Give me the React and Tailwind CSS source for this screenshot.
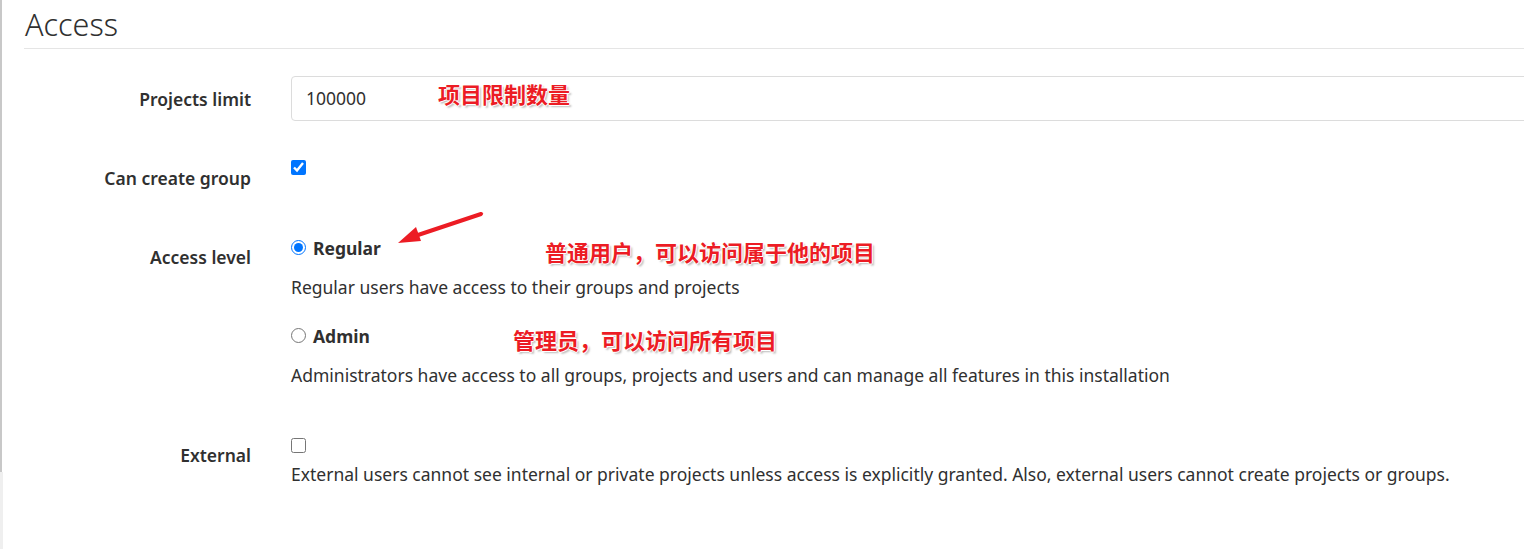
export default function App() {
  const note = 'absolute font-bold text-[22px] leading-[22px] text-[#ec1c24] [text-shadow:1px_0_0_#fff,-1px_0_0_#fff,0_1px_0_#fff,0_-1px_0_#fff,2px_2px_2px_#bbb]'

  return (
    <div
      className="relative flex h-[549px] w-[1524px] overflow-hidden bg-white text-[17.5px] text-[#303030]"
      style={{ fontFamily: '"Noto Sans", "Noto Sans CJK SC", sans-serif' }}
    >
      {/* left edge */}
      <div className="flex w-[3px] shrink-0 flex-col">
        <div className="h-[472px] w-[2px] bg-[#c8c8c8]" />
        <div className="flex-1 bg-[#efefef]" />
      </div>

      <div className="flex-1 pl-[21px]">
        <h2 className="h-[49px] border-b border-[#e5e5e5] pt-[5px] pl-[1px] text-[30.5px] font-light leading-[38px]">
          Access
        </h2>

        {/* Projects limit */}
        <div className="mt-[27px] flex gap-[40px]">
          <label className="w-[227px] shrink-0 pt-[11px] text-right font-semibold leading-6">Projects limit</label>
          <div className="flex h-[45px] w-[1260px] shrink-0 items-center rounded-[4px] border border-[#dcdcdc] px-[14px]">
            100000
          </div>
        </div>

        {/* Can create group */}
        <div className="mt-[34px] flex gap-[40px]">
          <label className="w-[227px] shrink-0 pt-[11px] text-right font-semibold leading-6">Can create group</label>
          <div className="h-6">
            <input type="checkbox" defaultChecked className="mt-[4px] h-[15px] w-[15px] accent-[#0075ff]" />
          </div>
        </div>

        {/* Access level */}
        <div className="mt-[46px] flex gap-[40px]">
          <label className="w-[227px] shrink-0 pt-[9px] text-right font-semibold leading-6">Access level</label>
          <div>
            <div className="flex h-6 items-center gap-[7px]">
              <input type="radio" name="lvl" defaultChecked className="mt-[-2px] h-[15px] w-[15px] accent-[#0075ff]" />
              <span className="font-bold">Regular</span>
            </div>
            <p className="mt-[15px] leading-6">Regular users have access to their groups and projects</p>
            <div className="mt-[25px] flex h-6 items-center gap-[7px]">
              <input type="radio" name="lvl" className="mt-[-2px] h-[15px] w-[15px]" />
              <span className="font-bold">Admin</span>
            </div>
            <p className="mt-[15px] leading-6">
              Administrators have access to all groups, projects and users and can manage all features in this installation
            </p>
          </div>
        </div>

        {/* External */}
        <div className="mt-[46px] flex gap-[40px]">
          <label className="w-[227px] shrink-0 pt-[10px] text-right font-semibold leading-6">External</label>
          <div>
            <div className="h-6">
              <input type="checkbox" className="mt-[3px] h-[15px] w-[15px]" />
            </div>
            <p className="mt-[5px] leading-6">
              External users cannot see internal or private projects unless access is explicitly granted. Also, external users cannot create projects or groups.
            </p>
          </div>
        </div>
      </div>

      {/* annotations */}
      <span className={`${note} left-[438px] top-[83px]`}>项目限制数量</span>
      <span className={`${note} left-[545px] top-[241px]`}>普通用户，可以访问属于他的项目</span>
      <span className={`${note} left-[513px] top-[329px]`}>管理员，可以访问所有项目</span>
      <svg className="absolute left-[390px] top-[205px]" width="100" height="45" viewBox="0 0 100 45">
        <line x1="91" y1="9" x2="22" y2="32" stroke="#ec1c24" strokeWidth="4" strokeLinecap="round" />
        <polygon points="8,38 26,22 31,36" fill="#ec1c24" />
      </svg>
    </div>
  )
}
